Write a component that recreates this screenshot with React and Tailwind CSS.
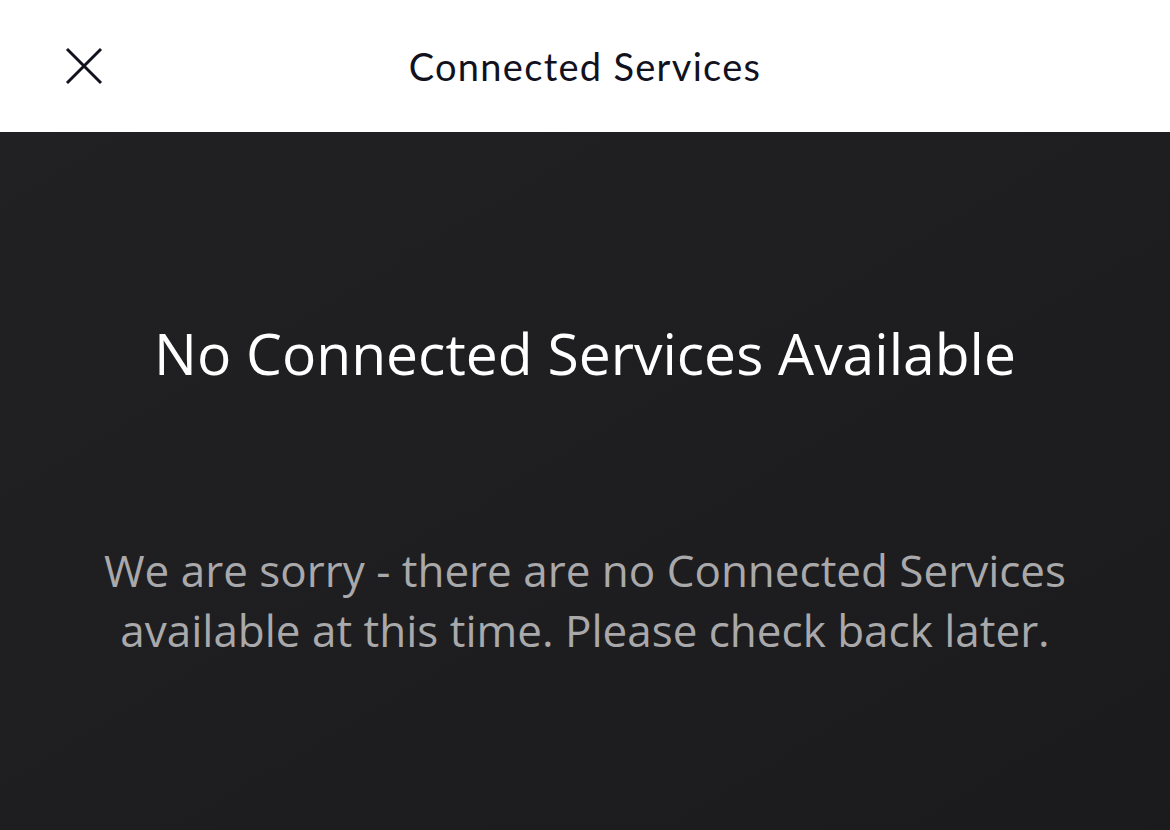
export default function App() {
  return (
    <div className="w-[1170px] h-[830px] flex flex-col bg-[#1e1e20] overflow-hidden">
      <header className="h-[132px] bg-white flex items-center relative shrink-0">
        <button className="absolute left-[64px] top-[46px] w-[40px] h-[40px] flex items-center justify-center">
          <svg width="40" height="40" viewBox="0 0 40 40" fill="none">
            <path d="M3 3 L37 37 M37 3 L3 37" stroke="#12121f" strokeWidth="3" />
          </svg>
        </button>
        <h1
          className="w-full text-center text-[38px] tracking-[1.3px] text-[#12121f] leading-none"
          style={{ fontFamily: "Lato, 'Open Sans', sans-serif" }}
        >
          Connected Services
        </h1>
      </header>
      <main
        className="flex-1 flex flex-col items-center pt-[186px] bg-gradient-to-br from-[#212123] to-[#1b1b1d]"
        style={{ fontFamily: "'Open Sans', 'Noto Sans', sans-serif" }}
      >
        <h2 className="text-[57px] leading-[70px] text-white text-center">
          No Connected Services Available
        </h2>
        <p className="mt-[152px] text-[44px] leading-[60px] text-[#a9a9ab] text-center">
          We are sorry - there are no Connected Services
          <br />
          available at this time. Please check back later.
        </p>
      </main>
    </div>
  );
}
